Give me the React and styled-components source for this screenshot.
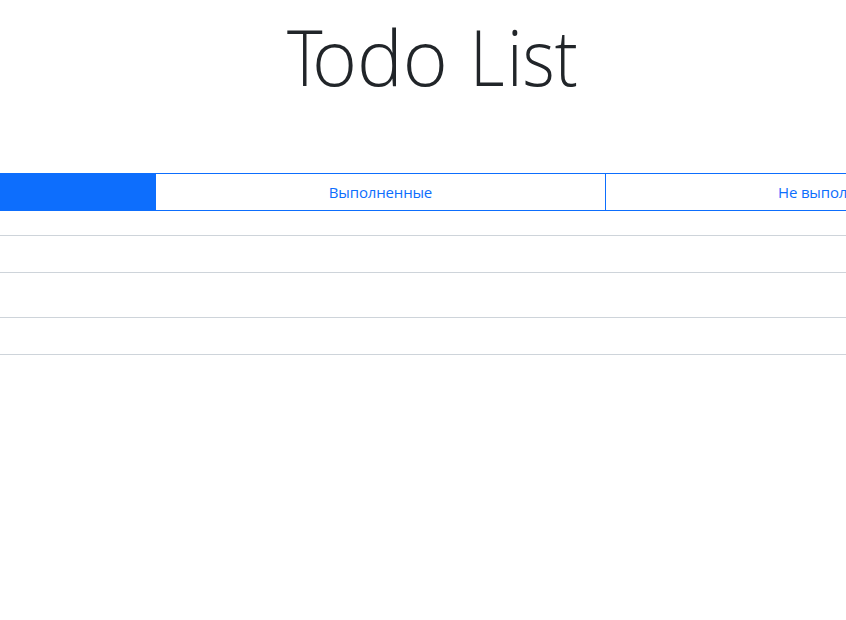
import React from "react";
import styled, { createGlobalStyle } from "styled-components";

const GlobalStyle = createGlobalStyle`
  *, *::before, *::after { box-sizing: border-box; }
  body {
    margin: 0;
    background: #fff;
    color: #212529;
    font-family: "Open Sans", "Noto Sans", sans-serif;
    font-size: 15px;
    overflow: hidden;
  }
`;

const Page = styled.main`
  width: 846px;
  height: 620px;
  overflow: hidden;
`;

const Title = styled.h1`
  display: flex;
  margin: 0;
  padding: 8px 0 0 287px;
  height: 173px;
  font-size: 78px;
  font-weight: 300;
  line-height: 96px;
  white-space: pre;
`;

const Letters = styled.span`
  flex: none;
  width: ${(p) => p.$width}px;
  transform: scaleX(${(p) => p.$stretch});
  transform-origin: left;
`;

const Filters = styled.div`
  display: grid;
  grid-template-columns: 156px 450px 450px;
  width: 1056px;
  height: 38px;
`;

const FilterButton = styled.button`
  margin: 0;
  padding: 0;
  border: 0 solid #0d6efd;
  border-width: 1px 1px 1px 0;
  background: ${(p) => (p.$active ? "#0d6efd" : "#fff")};
  color: ${(p) => (p.$active ? "#fff" : "#0d6efd")};
  font: inherit;
  line-height: 24px;
  letter-spacing: -0.15px;
`;

const List = styled.div`
  display: grid;
  row-gap: 44px;
  margin-top: 24px;
`;

const Field = styled.div`
  height: 38px;
  border: solid #ced4da;
  border-width: 1px 0;
`;

export default function App() {
  return (
    <Page>
      <GlobalStyle />
      <Title>
        <Letters $width={25} $stretch={0.87}>T</Letters>
        <Letters $width={158} $stretch={0.985}>odo </Letters>
        <Letters $width={37} $stretch={0.86}>L</Letters>
        <Letters $width={80} $stretch={0.885}>ist</Letters>
      </Title>
      <Filters>
        <FilterButton $active aria-label="Все" />
        <FilterButton>Выполненные</FilterButton>
        <FilterButton>Не выполнено</FilterButton>
      </Filters>
      <List>
        <Field />
        <Field />
      </List>
    </Page>
  );
}
